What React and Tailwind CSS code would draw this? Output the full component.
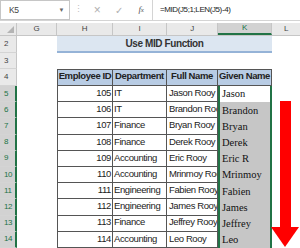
import React from "react";

const rows = [
  [105, "IT", "Jason Rooy", "Jason"],
  [106, "IT", "Brandon Rooy", "Brandon"],
  [107, "Finance", "Bryan Rooy", "Bryan"],
  [108, "Finance", "Derek Rooy", "Derek"],
  [109, "Accounting", "Eric Rooy", "Eric R"],
  [110, "Accounting", "Mrinmoy Rooy", "Mrinmoy"],
  [111, "Engineering", "Fabien Rooy", "Fabien"],
  [112, "Engineering", "James Rooy", "James"],
  [113, "Finance", "Jeffrey Rooy", "Jeffrey"],
  [114, "Accounting", "Leo Rooy", "Leo"],
];

function RowHead({ n, active }) {
  return (
    <div
      className={
        "w-[17px] shrink-0 h-full flex items-center pl-[4px] text-[8px] border-b border-[#d4d4d4] " +
        (active
          ? "bg-[#d2d2d2] text-[#217346] border-r-2 border-r-[#217346]"
          : "bg-[#e9e9e9] text-[#444] border-r border-r-[#c6c6c6]")
      }
    >
      {n}
    </div>
  );
}

function FormulaBar() {
  return (
    <div className="h-[21px] flex items-stretch border-b border-[#d4d4d4] bg-white text-[#444]">
      <div className="w-[70px] border border-[#c6c6c6] flex items-center justify-between pl-[8px] pr-[5px] text-[8.5px]">
        <span>K5</span>
        <span className="text-[6px] text-[#666]">▼</span>
      </div>
      <div className="w-[16px] flex items-center justify-center text-[9px] text-[#c0c0c0]">⋮</div>
      <div className="w-[22px] flex items-center justify-center text-[12px] text-[#b0b0b0]">×</div>
      <div className="w-[22px] flex items-center justify-center text-[10px] text-[#b0b0b0]">✓</div>
      <div className="w-[22px] flex items-center justify-center text-[9px] italic text-[#555] font-['Liberation_Serif',serif]">
        f<span className="text-[7px]">x</span>
      </div>
      <div className="flex-1 border-l border-[#d4d4d4] flex items-center pl-[7px] text-[8px] text-[#222]">
        =MID(J5;1;LEN(J5)-4)
      </div>
    </div>
  );
}

function ColHeads() {
  const cols = [
    ["G", "w-[40px]"],
    ["H", "w-[56px]"],
    ["I", "w-[54px]"],
    ["J", "w-[51px]"],
  ];
  return (
    <div className="h-[13px] flex bg-[#e9e9e9] text-[8px] text-[#444] border-b border-[#c6c6c6]">
      <div className="w-[17px] shrink-0 relative border-r border-[#c6c6c6]">
        <svg className="absolute right-[2px] bottom-[2px]" width="7" height="7" viewBox="0 0 7 7">
          <path d="M7 0 L7 7 L0 7 Z" fill="#b4b4b4" />
        </svg>
      </div>
      {cols.map(([c, w]) => (
        <div key={c} className={w + " shrink-0 flex items-center justify-center border-r border-[#c6c6c6]"}>
          {c}
        </div>
      ))}
      <div className="w-[54px] shrink-0 flex items-center justify-center bg-[#d2d2d2] text-[#217346] border-b-2 border-[#217346] border-r border-r-[#c6c6c6]">
        K
      </div>
      <div className="flex-1 flex items-center justify-center">L</div>
    </div>
  );
}

export default function App() {
  return (
    <div className="w-[300px] h-[248px] overflow-hidden bg-white relative font-['Liberation_Sans',Arial,sans-serif] tracking-tight">
      <FormulaBar />
      <div className="h-[2px] bg-white" />
      <ColHeads />

      {/* row 2: title */}
      <div className="h-[17px] flex">
        <RowHead n={2} />
        <div className="w-[40px] shrink-0" />
        <div className="w-[215px] shrink-0 bg-[#dce6f1] border-b-2 border-[#95b3d7] flex items-center justify-center text-[10px] font-bold text-[#333]">
          Use MID Function
        </div>
      </div>

      {/* row 3 */}
      <div className="h-[16px] flex">
        <RowHead n={3} />
      </div>

      {/* row 4: table header */}
      <div className="h-[17px] flex">
        <RowHead n={4} />
        <div className="w-[40px] shrink-0" />
        <div className="flex text-[9.5px] font-bold text-[#222] bg-[#b8cce4]">
          <div className="w-[56px] border border-[#555] flex items-end justify-center pb-[2px] whitespace-nowrap overflow-hidden">Employee ID</div>
          <div className="w-[54px] border-y border-r border-[#555] flex items-end justify-center pb-[2px] whitespace-nowrap overflow-hidden">Department</div>
          <div className="w-[51px] border-y border-r border-[#555] flex items-end justify-center pb-[2px] whitespace-nowrap overflow-hidden">Full Name</div>
          <div className="w-[54px] border-y border-r border-[#555] flex items-end justify-center pb-[2px] whitespace-nowrap overflow-hidden">Given Name</div>
        </div>
      </div>

      {rows.map(([id, dep, full, given], i) => (
        <div key={id} className="h-[16.2px] flex">
          <RowHead n={5 + i} active />
          <div className="w-[40px] shrink-0" />
          <div className="flex text-[9.5px] text-[#222]">
            <div className="w-[56px] border-x border-b border-[#555] flex items-end justify-end pr-[1px] pb-[1px]">{id}</div>
            <div className="w-[54px] border-r border-b border-[#555] flex items-end pl-[1px] pb-[1px] whitespace-nowrap overflow-hidden">{dep}</div>
            <div className="w-[51px] border-r border-b border-[#555] flex items-end pl-[2px] pb-[1px] whitespace-nowrap overflow-hidden">{full}</div>
            <div
              className={
                "w-[54px] border-x-2 border-[#217346] flex items-end pl-[2px] pb-[0px] whitespace-nowrap overflow-hidden font-['Liberation_Serif','Times_New_Roman',serif] tracking-normal text-[10.5px] text-[#111] " +
                (i === 0 ? "bg-white" : "bg-[#c6c6c6]")
              }
            >
              {given}
            </div>
          </div>
        </div>
      ))}

      <svg className="absolute left-[271px] top-[101px]" width="28" height="147" viewBox="0 0 28 147">
        <rect x="9" y="0" width="11" height="127" fill="#ff0000" />
        <path d="M0 126 L28 126 L14 146 Z" fill="#ff0000" />
      </svg>
    </div>
  );
}
